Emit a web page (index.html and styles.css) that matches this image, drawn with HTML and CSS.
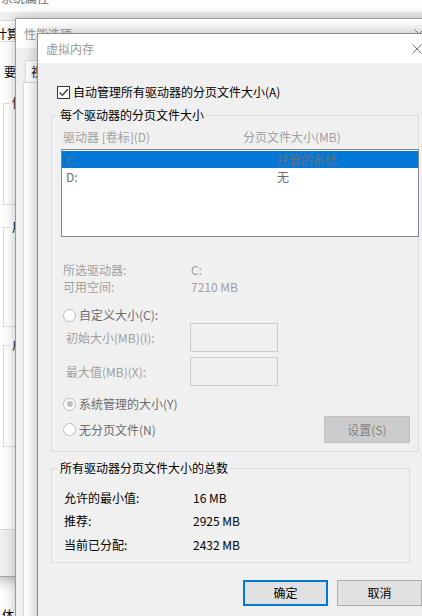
FILE: index.html
```html
<!DOCTYPE html>
<html lang="zh-CN">
<head>
<meta charset="utf-8">
<title>虚拟内存</title>
<link rel="stylesheet" href="styles.css">
</head>
<body>
  <div class="win win-sys">
    <div class="sys-title"><span>系统属性</span></div>
    <div class="sys-body">
      <div class="sys-tabs"><div class="sys-tab">计算机名</div></div>
      <div class="sys-page">
        <p class="sys-note">要进行大多数更改，你必须作为管理员登录。</p>
        <fieldset class="sys-group g1"><legend>性能</legend></fieldset>
        <fieldset class="sys-group g2"><legend>用户配置文件</legend></fieldset>
        <fieldset class="sys-group g3"><legend>启动和故障恢复</legend></fieldset>
      </div>
      <div class="sys-foot"></div>
    </div>
  </div>

  <div class="desk-text">体</div>

  <div class="win win-perf">
    <div class="title-bar perf-title">
      <span class="title-text">性能选项</span>
      <span class="close-btn"><svg width="10" height="10" viewBox="0 0 10 10"><path d="M0.5 0.5L9.5 9.5M9.5 0.5L0.5 9.5" stroke="#8a8a8a" stroke-width="1" fill="none"/></svg></span>
    </div>
    <div class="perf-body">
      <div class="perf-tabs"><div class="perf-tab">视觉效果</div></div>
      <div class="perf-page"></div>
    </div>
  </div>

  <div class="win win-vm">
    <div class="title-bar vm-title">
      <span class="title-text">虚拟内存</span>
      <span class="close-btn"><svg width="10" height="10" viewBox="0 0 10 10"><path d="M0.5 0.5L9.5 9.5M9.5 0.5L0.5 9.5" stroke="#7a7a7a" stroke-width="1" fill="none"/></svg></span>
    </div>
    <div class="vm-body">
      <div class="vm-check">
        <span class="checkbox"><svg width="11" height="11" viewBox="0 0 11 11"><path d="M1.5 5.5L4.3 8.4L9.8 2.2" stroke="#333" stroke-width="1.3" fill="none"/></svg></span>
        <span>自动管理所有驱动器的分页文件大小(A)</span>
      </div>

      <fieldset class="grp grp1">
        <legend>每个驱动器的分页文件大小</legend>
        <div class="hdr"><span class="hdr-c1">驱动器 [卷标](D)</span><span>分页文件大小(MB)</span></div>
        <div class="list">
          <div class="list-row sel"><span>C:</span><span>托管的系统</span></div>
          <div class="list-row"><span>D:</span><span>无</span></div>
        </div>
        <div class="info first"><span>所选驱动器:</span><span>C:</span></div>
        <div class="info"><span>可用空间:</span><span>7210 MB</span></div>
        <div class="radio-row r-custom"><span class="radio"></span><span>自定义大小(C):</span></div>
        <div class="field"><span class="field-label">初始大小(MB)(I):</span><span class="textbox"></span></div>
        <div class="field second"><span class="field-label">最大值(MB)(X):</span><span class="textbox"></span></div>
        <div class="radio-row r-sys"><span class="radio on"></span><span>系统管理的大小(Y)</span></div>
        <div class="last-row">
          <div class="radio-row"><span class="radio"></span><span>无分页文件(N)</span></div>
          <span class="btn-set">设置(S)</span>
        </div>
      </fieldset>

      <fieldset class="grp grp2">
        <legend>所有驱动器分页文件大小的总数</legend>
        <div class="sum r1"><span>允许的最小值:</span><span>16 MB</span></div>
        <div class="sum r2"><span>推荐:</span><span>2925 MB</span></div>
        <div class="sum r3"><span>当前已分配:</span><span>2432 MB</span></div>
      </fieldset>

      <div class="btn-row">
        <span class="btn btn-ok">确定</span>
        <span class="btn">取消</span>
      </div>
    </div>
  </div>
</body>
</html>
```

FILE: styles.css
```css
* { box-sizing: border-box; }
html, body { margin: 0; padding: 0; }
body {
  width: 422px;
  height: 616px;
  overflow: hidden;
  position: relative;
  background: #ffffff;
  font-family: "Noto Sans CJK SC", "Microsoft YaHei", sans-serif;
  font-size: 12px;
  line-height: 16px;
  color: #000;
}

.win { position: absolute; display: flex; flex-direction: column; }

/* ---------- background window 1 : 系统属性 ---------- */
.win-sys {
  left: -14px;
  top: -17px;
  width: 700px;
  height: 594px;
  background: #f0f0f0;
  border: 1px solid #aaaaaa;
  box-shadow: 0 3px 14px rgba(0,0,0,0.28);
}
.sys-title {
  height: 28px;
  background: #fff;
  padding: 6px 0 0 14px;
  color: #666;
}
.sys-body { flex: 1; display: flex; flex-direction: column; padding: 8px 0 0 7px; }
.sys-tabs { height: 21px; display: flex; }
.sys-tab {
  height: 21px;
  background: #fff;
  border: 1px solid #d9d9d9;
  border-bottom: none;
  padding: 5px 4px 0 0;
  white-space: nowrap;
}
.sys-page {
  height: 489px;
  background: #fff;
  border: 1px solid #d9d9d9;
  padding: 22px 0 0 9px;
  display: flex;
  flex-direction: column;
  align-items: flex-start;
}
.sys-note { margin: 0; white-space: nowrap; }
.sys-group {
  margin: 0 0 0 -1px;
  width: 400px;
  min-width: 0;
  border: 1px solid #dcdcdc;
  padding: 0;
}
.sys-group legend { margin-left: 6px; padding: 0 2px; line-height: 16px; }
.g1 { margin-top: 15px; height: 110px; }
.g2 { margin-top: 14px; height: 108px; }
.g3 { margin-top: 10px; height: 110px; }
.sys-foot { flex: 1; }

.desk-text { position: absolute; left: 2px; top: 607px; }

/* ---------- window 2 : 性能选项 ---------- */
.win-perf {
  left: 15px;
  top: 18px;
  width: 428px;
  height: 620px;
  background: #f0f0f0;
  border: 1px solid #9b9b9b;
  box-shadow: 0 0 12px rgba(0,0,0,0.25);
}
.title-bar {
  height: 29px;
  background: #fff;
  display: flex;
  align-items: center;
  justify-content: space-between;
  padding-left: 8px;
  flex-shrink: 0;
}
.title-text { color: #999; }
.close-btn {
  width: 46px;
  height: 29px;
  display: flex;
  align-items: center;
  justify-content: center;
}
.perf-body { flex: 1; display: flex; flex-direction: column; padding: 12px 0 0 7px; }
.perf-tabs { height: 22px; display: flex; padding-left: 2px; }
.perf-tab {
  height: 22px;
  background: #fff;
  border: 1px solid #d9d9d9;
  border-bottom: none;
  padding: 3px 6px 0 5px;
  white-space: nowrap;
}
.perf-page { flex: 1; background: #fff; border: 1px solid #d9d9d9; }

/* ---------- window 3 : 虚拟内存 ---------- */
.win-vm {
  left: 37px;
  top: 33px;
  width: 404px;
  height: 600px;
  background: #f0f0f0;
  border: 1px solid #8c8c8c;
  box-shadow: 0 0 14px rgba(0,0,0,0.3);
}
.vm-title .title-text { padding-top: 1px; }
.vm-body { flex: 1; padding: 0 0 0 13px; display: flex; flex-direction: column; align-items: flex-start; }

.vm-check {
  margin: 21px 0 0 6px;
  height: 16px;
  display: flex;
  align-items: center;
  gap: 3px;
}
.checkbox {
  width: 13px;
  height: 13px;
  border: 1px solid #333;
  background: #fff;
  display: flex;
  align-items: center;
  justify-content: center;
}

.grp {
  margin: 0;
  min-width: 0;
  border: 1px solid #dcdcdc;
  padding: 0;
}
.grp legend { margin-left: 6px; padding: 0 2px; line-height: 16px; }
.grp1 { margin-top: 7px; width: 368px; padding-bottom: 8px; }
.grp2 { margin-top: 8px; width: 359px; padding-bottom: 9px; }

.hdr { margin-top: 6px; padding-left: 11px; height: 16px; display: flex; color: #a0a0a0; }
.hdr-c1 { width: 180px; }

.list {
  margin: 4px 0 0 9px;
  width: 358px;
  height: 88px;
  border: 1px solid #828790;
  background: #fff;
  padding-top: 1px;
}
.list-row {
  height: 17px;
  line-height: 17px;
  display: grid;
  grid-template-columns: 211px 1fr;
  padding-left: 4px;
  color: #6d6d6d;
}
.list-row.sel { background: #0078d7; color: #6b6f78; }

.info {
  height: 16px;
  margin-top: 1px;
  padding-left: 11px;
  display: grid;
  grid-template-columns: 128px auto;
  color: #a0a0a0;
}
.info.first { margin-top: 25px; }

.radio-row {
  height: 16px;
  display: flex;
  align-items: center;
  gap: 3px;
  color: #6d6d6d;
}
.r-custom { margin: 12px 0 0 11px; }
.r-sys { margin: 10px 0 0 11px; }
.radio {
  width: 13px;
  height: 13px;
  border: 1px solid #bcbcbc;
  border-radius: 50%;
  background: #fff;
  display: flex;
  align-items: center;
  justify-content: center;
}
.radio.on::after {
  content: "";
  width: 6px;
  height: 6px;
  border-radius: 50%;
  background: #c0c0c0;
}

.field { display: flex; align-items: center; padding-left: 14px; height: 29px; color: #a0a0a0; }
.field.second { margin-top: 5px; }
.field-label { width: 124px; }
.textbox { width: 88px; height: 29px; border: 1px solid #cccccc; background: #f0f0f0; }

.last-row {
  margin-top: 4px;
  height: 27px;
  display: flex;
  align-items: center;
  justify-content: space-between;
  padding: 0 8px 0 11px;
}
.btn-set {
  width: 86px;
  height: 27px;
  background: #cccccc;
  border: 1px solid #bfbfbf;
  color: #838383;
  display: flex;
  align-items: center;
  justify-content: center;
}

.sum {
  height: 16px;
  padding-left: 12px;
  display: grid;
  grid-template-columns: 129px auto;
}
.sum.r1 { margin-top: 14px; }
.sum.r2 { margin-top: 7px; }
.sum.r3 { margin-top: 8px; }

.btn-row { margin: 17px 0 0 192px; display: flex; gap: 9px; }
.btn {
  width: 85px;
  height: 26px;
  background: #e1e1e1;
  border: 1px solid #adadad;
  display: flex;
  align-items: center;
  justify-content: center;
}
.btn-ok { border: 2px solid #0078d7; }
```
